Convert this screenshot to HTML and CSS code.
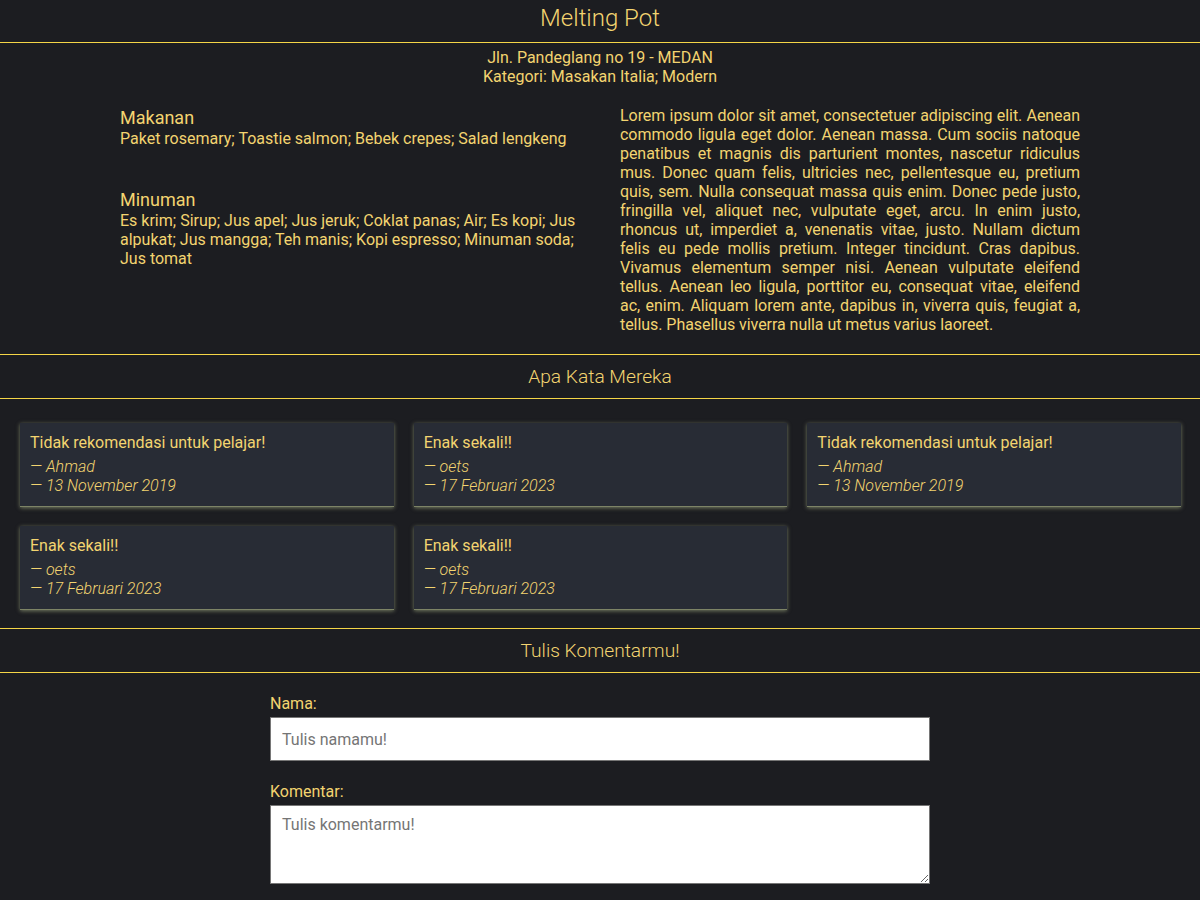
FILE: index.html
```html
<!DOCTYPE html>
<html lang="id">
<head>
<meta charset="utf-8">
<title>Melting Pot</title>
<link rel="stylesheet" href="styles.css">
</head>
<body>
<header class="site-header">
  <h1 class="site-title">Melting Pot</h1>
</header>
<section class="info">
  <p class="address">Jln. Pandeglang no 19 - MEDAN<br>Kategori: Masakan Italia; Modern</p>
  <div class="info-cols">
    <div class="menu">
      <h3 class="menu-title">Makanan</h3>
      <p class="menu-list">Paket rosemary; Toastie salmon; Bebek crepes; Salad lengkeng</p>
      <h3 class="menu-title menu-title-gap">Minuman</h3>
      <p class="menu-list">Es krim; Sirup; Jus apel; Jus jeruk; Coklat panas; Air; Es kopi; Jus alpukat; Jus mangga; Teh manis; Kopi espresso; Minuman soda; Jus tomat</p>
    </div>
    <p class="desc">Lorem ipsum dolor sit amet, consectetuer adipiscing elit. Aenean commodo ligula eget dolor. Aenean massa. Cum sociis natoque penatibus et magnis dis parturient montes, nascetur ridiculus mus. Donec quam felis, ultricies nec, pellentesque eu, pretium quis, sem. Nulla consequat massa quis enim. Donec pede justo, fringilla vel, aliquet nec, vulputate eget, arcu. In enim justo, rhoncus ut, imperdiet a, venenatis vitae, justo. Nullam dictum felis eu pede mollis pretium. Integer tincidunt. Cras dapibus. Vivamus elementum semper nisi. Aenean vulputate eleifend tellus. Aenean leo ligula, porttitor eu, consequat vitae, eleifend ac,&nbsp;enim. Aliquam lorem ante, dapibus in, viverra quis, feugiat a, tellus. Phasellus viverra nulla ut metus varius laoreet.</p>
  </div>
</section>
<h2 class="section-title">Apa Kata Mereka</h2>
<section class="reviews">
  <article class="review">
    <p class="review-text">Tidak rekomendasi untuk pelajar!</p>
    <p class="review-meta">— Ahmad</p>
    <p class="review-meta">— 13 November 2019</p>
  </article>
  <article class="review">
    <p class="review-text">Enak sekali!!</p>
    <p class="review-meta">— oets</p>
    <p class="review-meta">— 17 Februari 2023</p>
  </article>
  <article class="review">
    <p class="review-text">Tidak rekomendasi untuk pelajar!</p>
    <p class="review-meta">— Ahmad</p>
    <p class="review-meta">— 13 November 2019</p>
  </article>
  <article class="review">
    <p class="review-text">Enak sekali!!</p>
    <p class="review-meta">— oets</p>
    <p class="review-meta">— 17 Februari 2023</p>
  </article>
  <article class="review">
    <p class="review-text">Enak sekali!!</p>
    <p class="review-meta">— oets</p>
    <p class="review-meta">— 17 Februari 2023</p>
  </article>
</section>
<h2 class="section-title">Tulis Komentarmu!</h2>
<form class="comment-form">
  <label class="field-label" for="nama">Nama:</label>
  <input class="field-input" id="nama" type="text" placeholder="Tulis namamu!">
  <label class="field-label" for="komentar">Komentar:</label>
  <textarea class="field-area" id="komentar" placeholder="Tulis komentarmu!"></textarea>
</form>
</body>
</html>
```
FILE: styles.css
```css
* { box-sizing: border-box; }
html, body {
  margin: 0;
  padding: 0;
  background: #1c1d21;
  color: #f3d470;
  font-family: Roboto, "Liberation Sans", sans-serif;
  font-size: 16px;
  line-height: 19px;
}
p, h1, h2, h3 { margin: 0; }

.site-header {
  border-bottom: 1px solid #f5d547;
}
.site-title {
  font-size: 24px;
  font-weight: 300;
  text-align: center;
  line-height: 36px;
  padding: 0 0 6px;
}

.info {
  padding: 5px 0 20px;
}
.address {
  text-align: center;
}
.info-cols {
  width: 960px;
  margin: 21px auto 0;
  display: grid;
  grid-template-columns: 1fr 1fr;
  gap: 40px;
}
.menu-title {
  font-size: 18px;
  font-weight: 400;
  line-height: 22px;
}
.menu-title-gap { margin-top: 41px; }
.desc {
  text-align: justify;
  margin-top: -1px;
  letter-spacing: -0.05px;
}

.section-title {
  border-top: 1px solid #f5d547;
  border-bottom: 1px solid #f5d547;
  font-size: 19.2px;
  font-weight: 300;
  text-align: center;
  line-height: 43px;
}

.reviews {
  display: grid;
  grid-template-columns: repeat(3, 1fr);
  gap: 19px 20px;
  padding: 24px 19px 18px 20px;
}
.review {
  background: #282c35;
  padding: 9px 10px 11px;
  box-shadow: 0 1px 4px rgba(190, 200, 150, 0.55);
  border-bottom: 1px solid #7d8466;
}
.review-text {
  font-size: 16px;
  line-height: 22px;
  margin-bottom: 3px;
}
.review-meta {
  font-style: italic;
  font-weight: 300;
  line-height: 19px;
}

.comment-form {
  width: 660px;
  margin: 0 auto;
  padding-top: 20px;
  display: flex;
  flex-direction: column;
}
.field-label {
  line-height: 22px;
  margin-bottom: 2px;
}
.field-input, .field-area {
  width: 100%;
  background: #fff;
  border: 1px solid #767676;
  font-family: Roboto, "Liberation Sans", sans-serif;
  font-size: 16px;
  color: #333;
  padding: 10px 11px;
}
.field-input {
  height: 44px;
  margin-bottom: 20px;
}
.field-area {
  height: 79px;
  resize: vertical;
  padding-top: 9px;
}
.field-input::placeholder, .field-area::placeholder { color: #757575; }
```
